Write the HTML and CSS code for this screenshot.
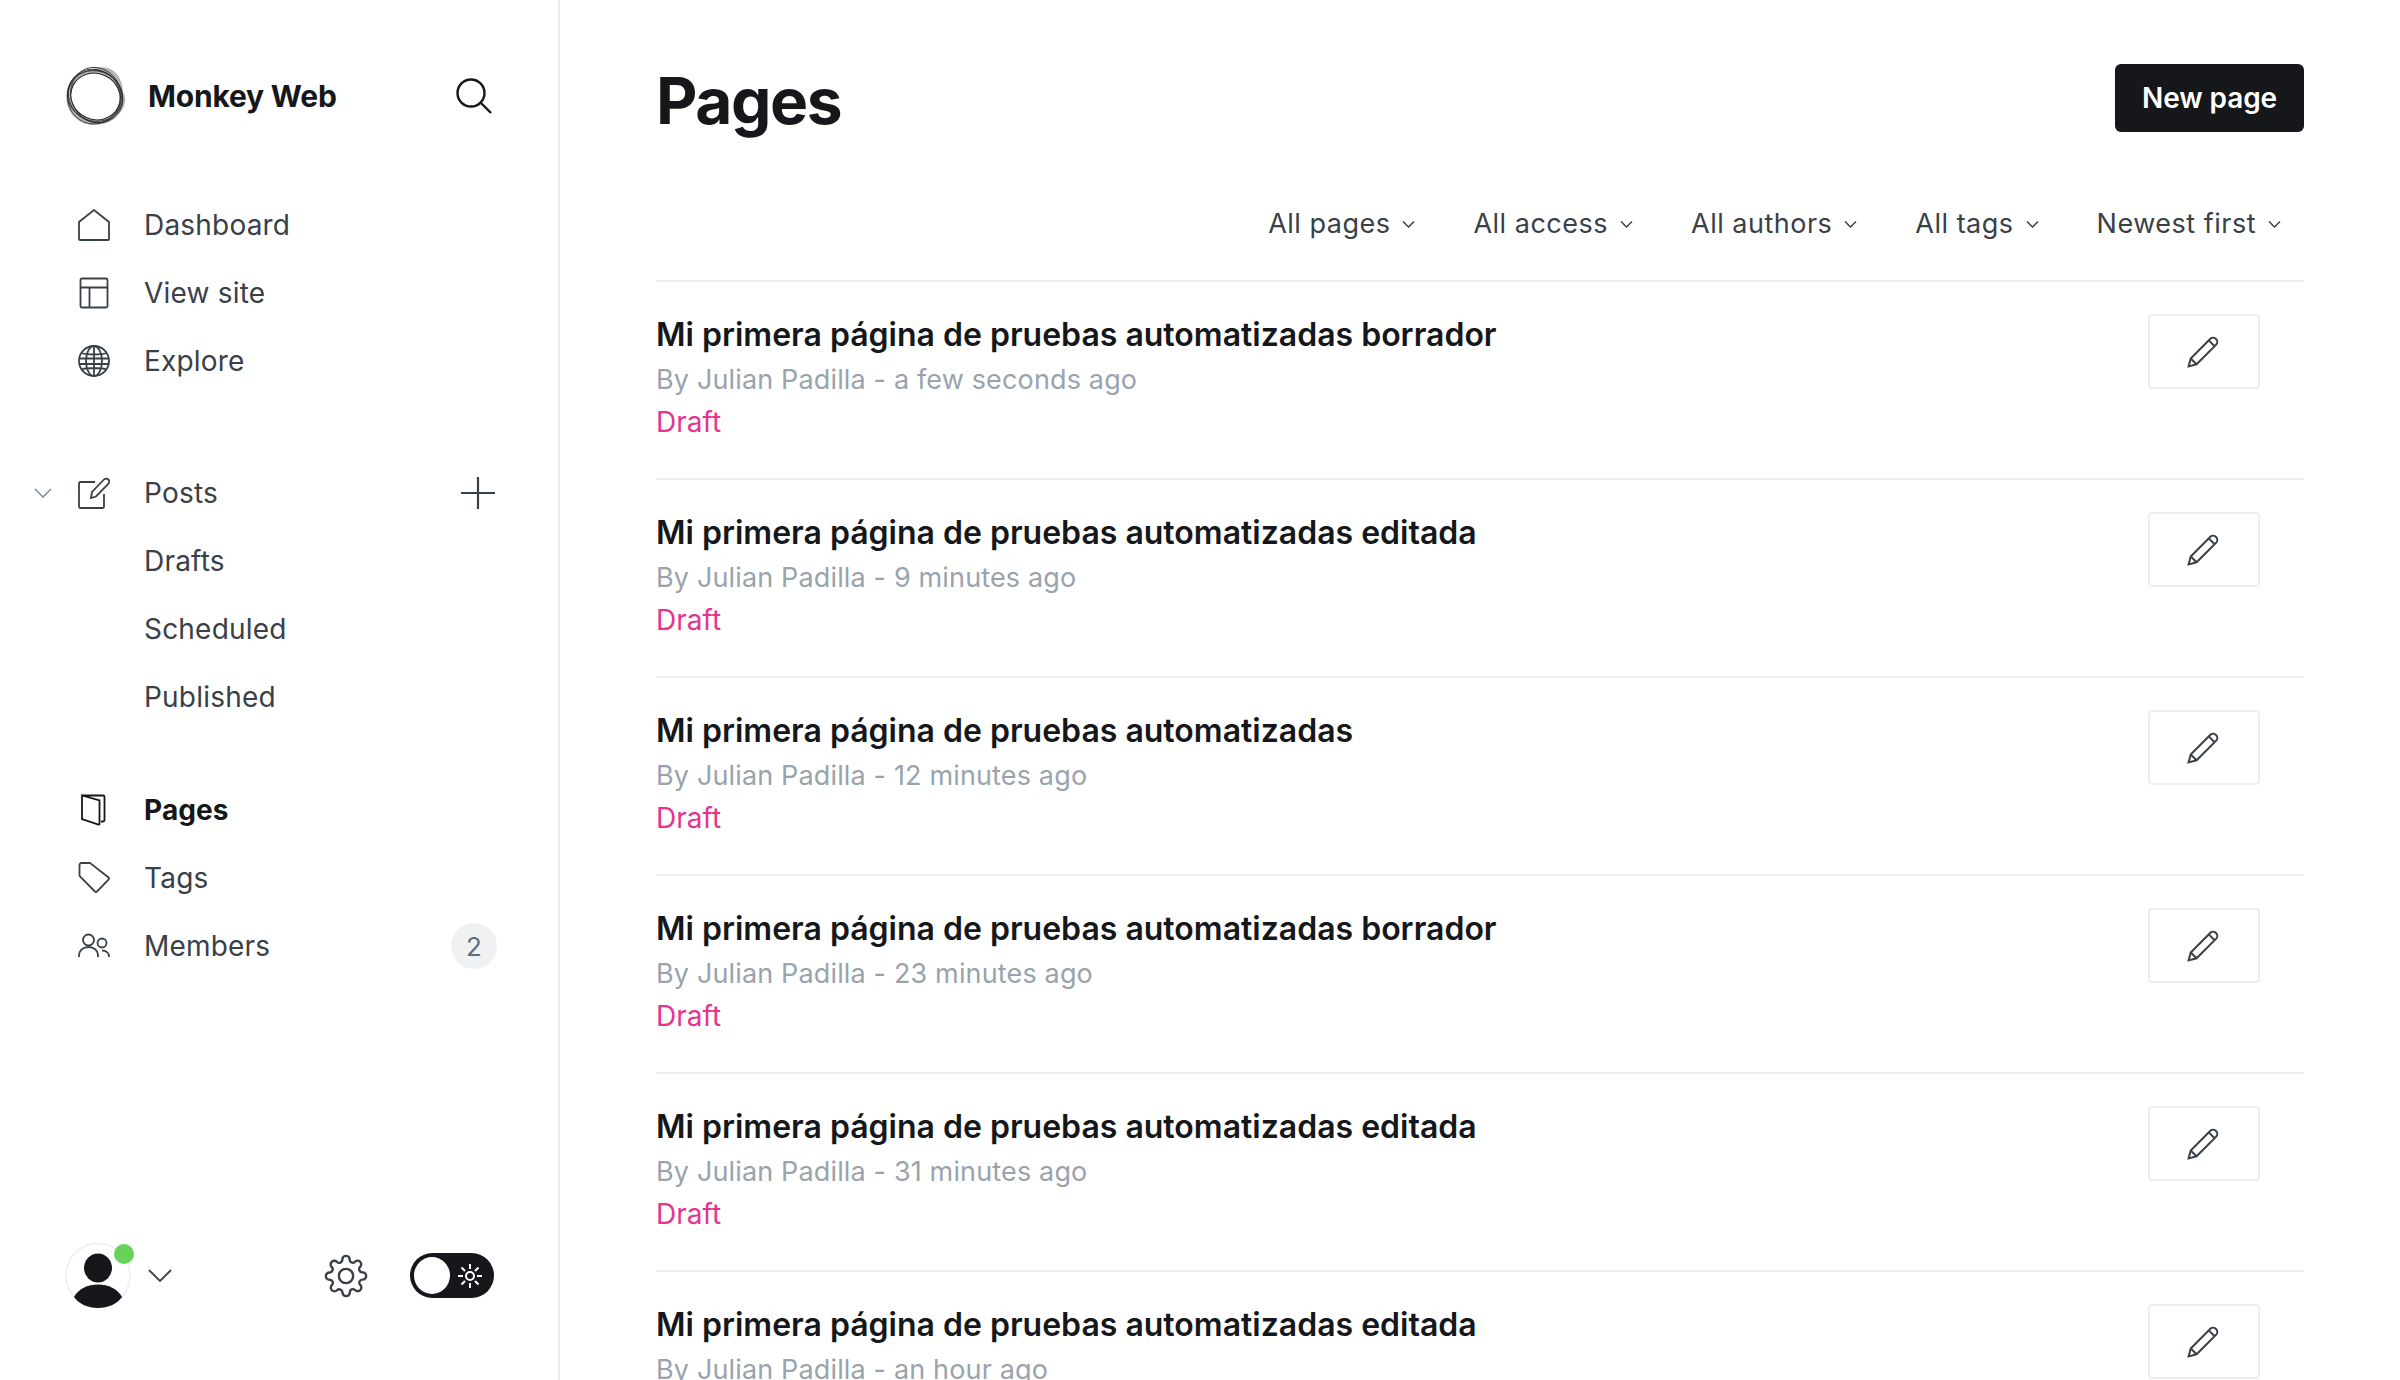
FILE: index.html
```html
<!DOCTYPE html>
<html lang="en">
  <head>
    <meta charset="UTF-8" />
    <title>Pages - Monkey Web</title>
    <link rel="stylesheet" href="styles.css">
  </head>
  <body>
    <svg class="sprites" width="0" height="0">
      <symbol id="pencil" viewBox="0 0 32 32">
        <path d="M1.500 30.500l2-7.500L22 4.500a3.600 3.600 0 0 1 5 0l.5.5a3.600 3.600 0 0 1 0 5L9 28.500z M20.500 6l5.500 5.500 M3.500 23l5.500 5.500" />
      </symbol>
      <symbol id="caret" viewBox="0 0 13 8">
        <path d="M1 1.500L6.500 7 12 1.500" />
      </symbol>
    </svg>

    <aside class="sidebar">
      <div class="brand">
        <svg class="logo" viewBox="0 0 61 59">
          <path class="logo-band" d="M3 21C8 9 18 5 27 4c5-4 17-4 23 2 6 6 8 14 8 20 4 6 2 16-4 22-6 8-16 11-26 11C16 59 5 50 2 38 1 32 1 27 3 21z" />
          <ellipse cx="30.500" cy="30" rx="28.500" ry="25.500" transform="rotate(40 30.500 30)" />
          <ellipse cx="30" cy="30" rx="28" ry="25" transform="rotate(20 30 30)" />
          <ellipse cx="29" cy="31" rx="26.500" ry="27" />
          <ellipse cx="31" cy="29" rx="28" ry="25" transform="rotate(70 31 29)" />
          <ellipse class="logo-hole" cx="30.500" cy="30.500" rx="25" ry="23" transform="rotate(25 30.500 30.500)" />
        </svg>
        <span class="brand-name">Monkey Web</span>
        <svg class="search" viewBox="0 0 36 36">
          <circle cx="15" cy="15" r="13.500" />
          <path d="M25 25l10 10" />
        </svg>
      </div>

      <nav class="nav-group">
        <a class="nav-item">
          <svg class="nav-icon" viewBox="0 0 32 32"><path d="M1 30V13L16 1l15 12v17a1 1 0 0 1-1 1H2a1 1 0 0 1-1-1z" /></svg>
          Dashboard
        </a>
        <a class="nav-item">
          <svg class="nav-icon" viewBox="0 0 32 32"><rect x="2.500" y="1.500" width="27" height="29" rx="1.500" /><path d="M2.500 10.500h27 M11.500 10.500v20" /></svg>
          View site
        </a>
        <a class="nav-item">
          <svg class="nav-icon" viewBox="0 0 32 32"><circle cx="16" cy="16" r="15" /><ellipse cx="16" cy="16" rx="8" ry="15" /><path d="M16 1v30 M3.500 8c6 2 19 2 25 0 M1.200 13.500h29.600 M1.200 19h29.600 M3.500 24.500c6-2 19-2 25 0" /></svg>
          Explore
        </a>
      </nav>

      <nav class="nav-group">
        <a class="nav-item">
          <svg class="nav-caret" viewBox="0 0 18 10"><path d="M1 1l8 8 8-8" /></svg>
          <svg class="nav-icon" viewBox="0 0 32 32"><path d="M17 5H2.500A1.500 1.500 0 0 0 1 6.500v23A1.500 1.500 0 0 0 2.500 31h22a1.500 1.500 0 0 0 1.500-1.500V17 M13 21l1-6L26 2.500a3 3 0 0 1 4.300 0 3 3 0 0 1 0 4.300L18 19.500z" /></svg>
          Posts
          <svg class="plus" viewBox="0 0 34 32"><path d="M17 0v32 M0 16h34" /></svg>
        </a>
        <a class="nav-item sub">Drafts</a>
        <a class="nav-item sub">Scheduled</a>
        <a class="nav-item sub">Published</a>
      </nav>

      <nav class="nav-group tight">
        <a class="nav-item active">
          <svg class="nav-icon" viewBox="-1 0 32 32"><path d="M3 1.500h21a1.500 1.500 0 0 1 1.500 1.500v23a1.500 1.500 0 0 1-1.500 1.500h-2 M3 1.500v23.500l16.500 5.500a1 1 0 0 0 1-.5V6.500L3 1.500z" /></svg>
          Pages
        </a>
        <a class="nav-item">
          <svg class="nav-icon" viewBox="0 0 32 32"><path d="M1.500 3a2 2 0 0 1 2-2h8a2 2 0 0 1 1.400.6L30.500 15.500a1.500 1.500 0 0 1 0 2.100L19 29.500a1.500 1.500 0 0 1-2.100 0L2 14.500a2 2 0 0 1-.5-1.400z" /></svg>
          Tags
        </a>
        <a class="nav-item">
          <svg class="nav-icon" viewBox="0 0 32 32"><circle cx="10.500" cy="10" r="5.500" /><path d="M1 27v-1c0-5.500 4-9 9.500-9s9.500 3.500 9.500 9v1" /><circle cx="24" cy="13" r="4.500" /><path d="M24 20.500c4 0 7 2.500 7 6v.5" /></svg>
          Members
          <span class="count">2</span>
        </a>
      </nav>

      <div class="sidebar-foot">
        <span class="avatar">
          <svg viewBox="0 0 68 67">
            <circle cx="34" cy="33.500" r="32" class="avatar-ring" />
            <ellipse cx="34" cy="26" rx="14" ry="14.500" class="avatar-fill" />
            <path d="M10 55c4-8 14-12.500 24-12.500S54 47 58 55c-5 7-14 11-24 11S15 62 10 55z" class="avatar-fill" />
          </svg>
          <span class="status-dot"></span>
        </span>
        <svg class="foot-caret" viewBox="0 0 24 13"><path d="M1 1l11 11L23 1" /></svg>
        <svg class="gear" viewBox="0 0 24 24"><circle cx="12" cy="12" r="3.900" /><path d="M19.400 15a1.650 1.650 0 0 0 .33 1.820l.06.06a2 2 0 0 1 0 2.830 2 2 0 0 1-2.830 0l-.06-.06a1.650 1.650 0 0 0-1.820-.33 1.650 1.650 0 0 0-1 1.510V21a2 2 0 0 1-2 2 2 2 0 0 1-2-2v-.09A1.650 1.650 0 0 0 9 19.400a1.650 1.650 0 0 0-1.820.33l-.06.06a2 2 0 0 1-2.830 0 2 2 0 0 1 0-2.830l.06-.06a1.650 1.650 0 0 0 .33-1.820 1.650 1.650 0 0 0-1.510-1H3a2 2 0 0 1-2-2 2 2 0 0 1 2-2h.09A1.650 1.650 0 0 0 4.600 9a1.650 1.650 0 0 0-.33-1.820l-.06-.06a2 2 0 0 1 0-2.830 2 2 0 0 1 2.830 0l.06.06a1.650 1.650 0 0 0 1.820.33H9a1.650 1.650 0 0 0 1-1.510V3a2 2 0 0 1 2-2 2 2 0 0 1 2 2v.09a1.650 1.650 0 0 0 1 1.510 1.650 1.650 0 0 0 1.820-.33l.06-.06a2 2 0 0 1 2.830 0 2 2 0 0 1 0 2.830l-.06.06a1.650 1.650 0 0 0-.33 1.820V9a1.650 1.650 0 0 0 1.510 1H21a2 2 0 0 1 2 2 2 2 0 0 1-2 2h-.09a1.650 1.650 0 0 0-1.510 1z" /></svg>
        <span class="toggle">
          <span class="knob"></span>
          <svg class="sun" viewBox="0 0 24 24"><circle cx="12" cy="12" r="4" /><path d="M12 0v5 M12 19v5 M0 12h5 M19 12h5 M3.500 3.500l3.500 3.500 M17 17l3.500 3.500 M3.500 20.500l3.500-3.500 M17 7l3.500-3.500" /></svg>
        </span>
      </div>
    </aside>

    <main class="content">
      <header class="page-head">
        <h1>Pages</h1>
        <button class="new-page">New page</button>
      </header>

      <div class="filters">
        <span class="filter">All pages <svg viewBox="0 0 13 8"><use href="#caret" /></svg></span>
        <span class="filter">All access <svg viewBox="0 0 13 8"><use href="#caret" /></svg></span>
        <span class="filter">All authors <svg viewBox="0 0 13 8"><use href="#caret" /></svg></span>
        <span class="filter">All tags <svg viewBox="0 0 13 8"><use href="#caret" /></svg></span>
        <span class="filter">Newest first <svg viewBox="0 0 13 8"><use href="#caret" /></svg></span>
      </div>

      <ul class="page-list">
        <li class="page-row">
          <div>
            <h3>Mi primera página de pruebas automatizadas borrador</h3>
            <p class="meta">By Julian Padilla - a few seconds ago</p>
            <p class="status">Draft</p>
          </div>
          <a class="edit"><svg viewBox="0 0 32 32"><use href="#pencil" /></svg></a>
        </li>
        <li class="page-row">
          <div>
            <h3>Mi primera página de pruebas automatizadas editada</h3>
            <p class="meta">By Julian Padilla - 9 minutes ago</p>
            <p class="status">Draft</p>
          </div>
          <a class="edit"><svg viewBox="0 0 32 32"><use href="#pencil" /></svg></a>
        </li>
        <li class="page-row">
          <div>
            <h3>Mi primera página de pruebas automatizadas</h3>
            <p class="meta">By Julian Padilla - 12 minutes ago</p>
            <p class="status">Draft</p>
          </div>
          <a class="edit"><svg viewBox="0 0 32 32"><use href="#pencil" /></svg></a>
        </li>
        <li class="page-row">
          <div>
            <h3>Mi primera página de pruebas automatizadas borrador</h3>
            <p class="meta">By Julian Padilla - 23 minutes ago</p>
            <p class="status">Draft</p>
          </div>
          <a class="edit"><svg viewBox="0 0 32 32"><use href="#pencil" /></svg></a>
        </li>
        <li class="page-row">
          <div>
            <h3>Mi primera página de pruebas automatizadas editada</h3>
            <p class="meta">By Julian Padilla - 31 minutes ago</p>
            <p class="status">Draft</p>
          </div>
          <a class="edit"><svg viewBox="0 0 32 32"><use href="#pencil" /></svg></a>
        </li>
        <li class="page-row">
          <div>
            <h3>Mi primera página de pruebas automatizadas editada</h3>
            <p class="meta">By Julian Padilla - an hour ago</p>
            <p class="status">Draft</p>
          </div>
          <a class="edit"><svg viewBox="0 0 32 32"><use href="#pencil" /></svg></a>
        </li>
      </ul>
    </main>
  </body>
</html>
```

FILE: styles.css
```css
* {
  box-sizing: border-box;
}

html,
body {
  height: 100%;
}

body {
  display: flex;
  margin: 0;
  overflow: hidden;
  background: #fff;
  color: #15171a;
  font-family: Inter, "Liberation Sans", sans-serif;
}

.sprites {
  position: absolute;
}

svg {
  display: block;
  flex: none;
  fill: none;
  stroke: currentColor;
}

/* sidebar */
.sidebar {
  display: flex;
  flex-direction: column;
  flex: none;
  width: 560px;
  height: 100%;
  padding: 66px 61px 71px 0;
  border-right: 2px solid #eceef0;
}

.brand {
  display: flex;
  align-items: center;
  height: 59px;
  padding-left: 65px;
  padding-right: 5px;
}

.logo {
  width: 61px;
  height: 59px;
  stroke: #26282c;
  stroke-width: 0.800;
}

.logo-band {
  fill: #b4b5b6;
  stroke: none;
}

.logo-hole {
  fill: #fff;
  stroke: #26282c;
  stroke-width: 1.100;
}

.brand-name {
  margin-left: 22px;
  font-size: 30px;
  font-weight: 700;
  letter-spacing: -0.2px;
}

.search {
  width: 36px;
  height: 36px;
  margin-left: auto;
  stroke-width: 2.4;
}

.nav-group {
  margin-top: 64px;
}

.nav-group:nth-of-type(1) {
  margin-top: 66px;
}

.nav-group.tight {
  margin-top: 45px;
}

.nav-item {
  position: relative;
  display: flex;
  align-items: center;
  height: 68px;
  padding-left: 78px;
  color: #394047;
  font-size: 28px;
  letter-spacing: 0.2px;
}

.nav-item.active {
  color: #15171a;
  font-weight: 700;
  letter-spacing: 0.1px;
}

.nav-item.sub {
  padding-left: 144px;
}

.nav-icon {
  width: 32px;
  height: 32px;
  margin-right: 34px;
  stroke-width: 1.800;
}

.nav-caret {
  position: absolute;
  left: 34px;
  top: 29px;
  width: 18px;
  height: 10px;
  stroke: #7c8b9a;
  stroke-width: 1.500;
}

.plus {
  width: 34px;
  height: 32px;
  margin-left: auto;
  margin-right: 2px;
  stroke-width: 2.200;
}

.count {
  display: flex;
  align-items: center;
  justify-content: center;
  width: 46px;
  height: 46px;
  margin-left: auto;
  border-radius: 50%;
  background: #eff1f3;
  color: #626d79;
  font-size: 26px;
  letter-spacing: 0;
}

.sidebar-foot {
  display: flex;
  align-items: center;
  margin-top: auto;
  padding-left: 64px;
  padding-right: 3px;
}

.avatar {
  position: relative;
  width: 68px;
  height: 67px;
}

.avatar svg {
  width: 68px;
  height: 67px;
}

.avatar-ring {
  stroke: #eceef0;
  stroke-width: 1.500;
}

.avatar-fill {
  fill: #15171a;
  stroke: none;
}

.status-dot {
  position: absolute;
  top: 2px;
  right: -2px;
  width: 20px;
  height: 20px;
  border-radius: 50%;
  background: #68d25a;
}

.foot-caret {
  width: 24px;
  height: 13px;
  margin-left: 16px;
  stroke: #394047;
  stroke-width: 1.800;
}

.gear {
  width: 44px;
  height: 44px;
  margin-left: auto;
  margin-right: 42px;
  stroke: #394047;
  stroke-width: 1.300;
}

.toggle {
  display: flex;
  align-items: center;
  justify-content: space-between;
  width: 84px;
  height: 45px;
  padding: 0 12px 0 4px;
  border-radius: 23px;
  background: #15171a;
}

.knob {
  width: 36px;
  height: 37px;
  border-radius: 50%;
  background: #fff;
}

.sun {
  width: 24px;
  height: 24px;
  stroke: #fff;
  stroke-width: 2;
}

/* main column */
.content {
  flex: 1;
  min-width: 0;
  padding: 64px 96px 0;
}

.page-head {
  display: flex;
  align-items: flex-start;
  justify-content: space-between;
  height: 68px;
}

.page-head h1 {
  margin: 0;
  font-size: 64px;
  line-height: 73px;
  font-weight: 700;
  letter-spacing: -1.400px;
}

.new-page {
  width: 189px;
  height: 68px;
  padding: 0;
  border: 0;
  border-radius: 6px;
  background: #15171a;
  color: #fff;
  font-family: inherit;
  font-size: 28px;
  font-weight: 600;
  letter-spacing: -0.1px;
}

.filters {
  display: flex;
  align-items: flex-start;
  justify-content: flex-end;
  gap: 58px;
  height: 150px;
  padding: 75px 23px 0 0;
  border-bottom: 2px solid #eceef0;
  color: #394047;
  font-size: 27px;
  line-height: 34px;
  letter-spacing: 0.5px;
}

.filter {
  display: flex;
  align-items: center;
  gap: 12px;
}

.filter svg {
  width: 13px;
  height: 8px;
  stroke-width: 1.500;
}

.page-list {
  margin: 0;
  padding: 0;
  list-style: none;
}

.page-row {
  display: flex;
  justify-content: space-between;
  height: 198px;
  padding: 32px 44px 0 0;
  border-bottom: 2px solid #eceef0;
}

.page-row h3 {
  margin: 0;
  font-size: 32px;
  line-height: 42px;
  font-weight: 600;
  letter-spacing: 0;
}

.meta {
  margin: 3px 0 0;
  color: #99a3ad;
  font-size: 27px;
  line-height: 42px;
  letter-spacing: 0.15px;
}

.status {
  margin: 0;
  color: #e5348f;
  font-size: 28px;
  line-height: 42px;
}

.edit {
  display: flex;
  align-items: center;
  justify-content: center;
  width: 112px;
  height: 75px;
  border: 2px solid #eceef0;
  border-radius: 4px;
  color: #394047;
}

.edit svg {
  width: 34px;
  height: 34px;
  margin-bottom: 1px;
  stroke-width: 1.900;
}
```
